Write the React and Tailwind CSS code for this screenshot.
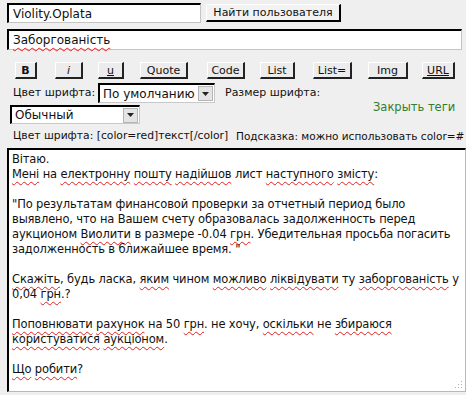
import React from "react";

const font = { fontFamily: '"DejaVu Sans", Verdana, sans-serif' };

function W({ children }) {
  return <span className="underline decoration-wavy decoration-[#e02020] decoration-1 underline-offset-[3px]">{children}</span>;
}

const tags = [
  { label: "B", cls: "ml-[15px] w-[22px] font-bold" },
  { label: "i", cls: "ml-[18px] w-[28px] italic" },
  { label: "u", cls: "ml-[15px] w-[26px] underline" },
  { label: "Quote", cls: "ml-[16px] w-[48px]" },
  { label: "Code", cls: "ml-[19px] w-[38px]" },
  { label: "List", cls: "ml-[15px] w-[35px]" },
  { label: "List=", cls: "ml-[18px] w-[39px]" },
  { label: "Img", cls: "ml-[16px] w-[40px]" },
  { label: "URL", cls: "ml-[14px] w-[33px] underline" },
];

function Select({ value, cls }) {
  return (
    <div className={"flex items-center bg-white border-t-2 border-l-2 border-t-black border-l-black border-b border-r border-b-[#c8c8c8] border-r-[#c8c8c8] " + cls}>
      <span className="flex-1 pl-[3px] text-[12px] leading-none text-[#111]">{value}</span>
      <span className="w-[15px] h-[15px] mr-[1px] flex items-center justify-center bg-[#e4e4e4] border border-[#b5b5b5]">
        <svg width="7" height="4" viewBox="0 0 7 4"><path d="M0 0h7L3.5 4z" fill="#222" /></svg>
      </span>
    </div>
  );
}

export default function App() {
  return (
    <div className="w-[466px] h-[395px] bg-[#efefef] overflow-hidden text-[#111]" style={font}>
      <div className="flex pt-[3px] pl-[7px]">
        <div className="w-[194px] h-[20px] bg-white border-t-2 border-l-2 border-black border-b border-r border-b-[#c4c4c4] border-r-[#c4c4c4] flex items-center pl-[4px] text-[12px]">
          Violity.Oplata
        </div>
        <button className="ml-[5px] mt-[1px] w-[135px] h-[18px] bg-[#f2f2f2] border border-t-white border-l-white border-b-2 border-r-2 border-b-black border-r-black text-[11px] leading-none flex items-center justify-center">
          Найти пользователя
        </button>
      </div>

      <div className="mt-[6px] ml-[7px] w-[455px] h-[21px] bg-white border-t-2 border-l-2 border-black border-b border-r border-b-[#c4c4c4] border-r-[#c4c4c4] flex items-center pl-[4px] text-[12px]">
        <W>Заборгованість</W>
      </div>

      <div className="flex mt-[12px] h-[17px]">
        {tags.map((t) => (
          <button
            key={t.label}
            className={"h-[17px] bg-[#ececec] border border-t-white border-l-white border-b-2 border-r-2 border-b-[#222] border-r-[#222] text-[11px] leading-none flex items-center justify-center " + t.cls}
          >
            {t.label}
          </button>
        ))}
      </div>

      <div className="flex">
        <div className="w-[360px]">
          <div className="flex items-center mt-[4px] h-[20px] text-[11px]">
            <span className="ml-[13px] w-[85px]">Цвет шрифта:</span>
            <Select value="По умолчанию" cls="w-[117px] h-[20px]" />
            <span className="ml-[10px]">Размер шрифта:</span>
          </div>
          <div className="mt-[2px] ml-[10px]">
            <Select value="Обычный" cls="w-[130px] h-[19px]" />
          </div>
        </div>
        <div className="flex-1 pt-[20px] pl-[13px] text-[11.5px] text-[#2f7d2f] whitespace-nowrap">Закрыть теги</div>
      </div>

      <div className="flex mt-[7px] h-[13px] text-[10.75px] leading-none whitespace-nowrap">
        <span className="ml-[13px] w-[223px]">Цвет шрифта: [color=red]текст[/color]</span>
        <span className="text-[10.5px]">Подсказка: можно использовать color=#</span>
      </div>

      <div className="mt-[4px] ml-[7px] w-[459px] h-[244px] bg-white border-t-2 border-l-2 border-black border-r border-b border-r-[#b8b8b8] border-b-[#b8b8b8] pl-[3px] pt-[2px] text-[11.5px] tracking-[-0.15px] leading-[15px] whitespace-nowrap overflow-hidden relative">
        <div>Вітаю.</div>
        <div><W>Мені</W> на <W>електронну</W> <W>пошту</W> <W>надійшов</W> лист <W>наступного</W> <W>змісту</W>:</div>
        <div>&nbsp;</div>
        <div>"По результатам финансовой проверки за отчетный период было</div>
        <div>выявлено, что на Вашем счету образовалась задолженность перед</div>
        <div>аукционом <W>Виолити</W> в размере -0.04 <W>грн</W>. Убедительная просьба погасить</div>
        <div>задолженность в ближайшее время. "</div>
        <div>&nbsp;</div>
        <div><W>Скажіть</W>, будь ласка, <W>яким</W> чином <W>можливо</W> <W>ліквідувати</W> ту <W>заборгованість</W> у</div>
        <div>0,04 <W>грн</W>.?</div>
        <div>&nbsp;</div>
        <div><W>Поповнювати</W> <W>рахунок</W> на 50 <W>грн</W>. не хочу, <W>оскільки</W> не <W>збираюся</W></div>
        <div><W>користуватися</W> <W>аукціоном</W>.</div>
        <div>&nbsp;</div>
        <div><W>Що</W> <W>робити</W>?</div>
        <svg className="absolute right-[2px] bottom-[2px]" width="9" height="9" viewBox="0 0 9 9">
          <g fill="#b0b0b0">
            <rect x="7" y="1" width="1" height="1" />
            <rect x="4" y="4" width="1" height="1" />
            <rect x="7" y="4" width="1" height="1" />
            <rect x="1" y="7" width="1" height="1" />
            <rect x="4" y="7" width="1" height="1" />
            <rect x="7" y="7" width="1" height="1" />
          </g>
        </svg>
      </div>
    </div>
  );
}
